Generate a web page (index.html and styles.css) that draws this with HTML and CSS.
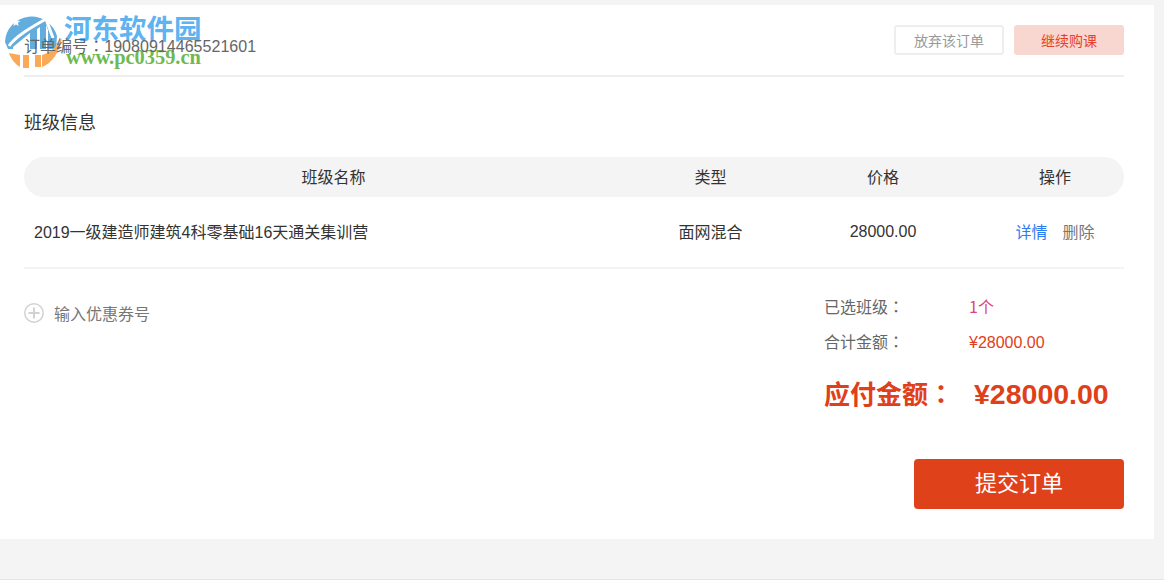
FILE: index.html
```html
<!DOCTYPE html>
<html lang="zh-CN">
<head>
  <meta charset="UTF-8" />
  <title>确认订单</title>
  <link rel="stylesheet" href="styles.css">
</head>
<body>
<div class="order-card">
  <div class="order-top">
    <span class="order-no">订单编号<span class="colon" lang="zh-Hant">：</span>19080914465521601</span>
    <div class="order-btns">
      <a class="btn-giveup">放弃该订单</a>
      <a class="btn-continue">继续购课</a>
    </div>
  </div>

  <h3 class="section-title">班级信息</h3>

  <div class="table-head">
    <div class="col-name">班级名称</div>
    <div class="col-type">类型</div>
    <div class="col-price">价格</div>
    <div class="col-op">操作</div>
  </div>
  <div class="table-row">
    <div class="col-name">2019一级建造师建筑4科零基础16天通关集训营</div>
    <div class="col-type">面网混合</div>
    <div class="col-price">28000.00</div>
    <div class="col-op"><a class="link-detail">详情</a><a class="link-del">删除</a></div>
  </div>

  <div class="order-bottom">
    <div class="coupon">
      <svg class="coupon-icon" width="20" height="20" viewBox="0 0 20 20">
        <circle cx="10" cy="10" r="9.25" fill="none" stroke="#d2d2d2" stroke-width="1.5"/>
        <path d="M10 4.500v11M4.500 10h11" stroke="#d2d2d2" stroke-width="2"/>
      </svg>
      <span>输入优惠券号</span>
    </div>
    <div class="summary">
      <div class="sum-row"><span class="sum-label">已选班级<span class="colon" lang="zh-Hant">：</span></span><span class="sum-count">1个</span></div>
      <div class="sum-row"><span class="sum-label">合计金额<span class="colon" lang="zh-Hant">：</span></span><span class="sum-money">¥28000.00</span></div>
      <div class="sum-pay"><span class="pay-label">应付金额<span class="colon" lang="zh-Hant">：</span></span><span>¥28000.00</span></div>
    </div>
  </div>

  <div class="submit-wrap"><a class="btn-submit">提交订单</a></div>
</div>

<div class="watermark">
  <svg class="wm-logo" width="66" height="66" viewBox="0 0 66 66">
    <path d="M5 37A26.500 26.500 0 0 1 57 31L56 44H8Z" fill="#5aa9dc"/>
    <path d="M9 41C16 31 32 22 46 14L53 33" fill="none" stroke="#fff" stroke-width="3"/>
    <path d="M13 42L30 28V45H13Z" fill="#fff"/>
    <path d="M37 24L40 22V45H37ZM46 20L48 25V45H46Z" fill="#fff"/>
    <path d="M16 13l1.200 2.800 3 .2-2.300 2 .7 3-2.600-1.600-2.600 1.600.7-3-2.300-2 3-.2z" fill="#fff"/>
    <path d="M9 48L20 50V62C15 59 11 54 9 48Z" fill="#f9a54f"/>
    <path d="M23 50H29V63H23ZM35 50H41V62H35Z" fill="#f9a54f"/>
    <path d="M42 62C52 58 59 48 62 33C56 42 50 48 42 50Z" fill="#f9a54f"/>
  </svg>
  <div class="wm-name">河东软件园</div>
  <div class="wm-url">www.pc0359.cn</div>
</div>

<div class="page-foot"></div>
</body>
</html>
```

FILE: styles.css
```css
html, body {
  margin: 0;
  padding: 0;
}

body {
  position: relative;
  height: 580px;
  overflow: hidden;
  background-color: #f4f4f4;
  font-family: "Noto Sans CJK SC", "Liberation Sans", sans-serif;
  font-size: 16px;
  color: #333;
}

a {
  display: block;
  text-decoration: none;
  cursor: pointer;
}

.colon {
  font-family: "Noto Sans CJK TC", sans-serif;
}

.order-card {
  width: 1100px;
  height: 534px;
  margin-top: 5px;
  padding: 0 30px 0 24px;
  background-color: white;
}

.order-top {
  display: flex;
  justify-content: space-between;
  align-items: center;
  height: 70px;
  border-bottom: 2px solid #eee;
}

/* sits above the watermark */
.order-no {
  position: relative;
  z-index: 1;
  color: #666;
  font-family: "Liberation Sans", "Noto Sans CJK SC", sans-serif;
  letter-spacing: 0.04px;
  padding-top: 9px;
}

.order-btns {
  display: flex;
  gap: 10px;
}

.order-btns a {
  box-sizing: border-box;
  width: 110px;
  height: 30px;
  line-height: 30px;
  text-align: center;
  font-size: 14px;
  border-radius: 3px;
}

.btn-giveup {
  border: 2px solid #eee;
  line-height: 26px !important;
  color: #999;
}

.btn-continue {
  background-color: #f7d7d0;
  color: #e8412a;
}

.section-title {
  margin: 0;
  padding-top: 30px;
  height: 50px;
  line-height: 28px;
  font-size: 18px;
  font-weight: normal;
  color: #333;
}

.table-head, .table-row {
  display: flex;
  align-items: center;
  box-sizing: border-box;
}

.table-head {
  height: 40px;
  padding-bottom: 2px;
  border-radius: 20px;
  background-color: #f4f4f4;
}

.table-row {
  height: 72px;
  padding-bottom: 3px;
  border-bottom: 2px solid #f4f4f4;
}

.col-name {
  width: 619px;
  text-align: center;
}

.col-type {
  width: 135px;
  text-align: center;
}

.col-price {
  width: 210px;
  text-align: center;
}

.col-op {
  width: 134px;
  padding-right: 2px;
  text-align: center;
}

.table-row .col-name {
  text-align: left;
  padding-left: 10px;
  width: 609px;
  font-family: "Liberation Sans", "Noto Sans CJK SC", sans-serif;
}

.table-row .col-price {
  padding-top: 3px;
  font-family: "Liberation Sans", sans-serif;
}

.table-row .col-op {
  display: flex;
  justify-content: center;
  gap: 15px;
  padding-right: 2px;
  width: 134px;
}

.link-detail {
  color: #2d7df0;
}

.link-del {
  color: #777;
}

.order-bottom {
  display: flex;
  justify-content: space-between;
}

.coupon {
  display: flex;
  align-items: center;
  gap: 10px;
  height: 20px;
  margin-top: 34px;
  color: #777;
}

.summary {
  width: 300px;
  padding-top: 20px;
}

.sum-row {
  display: flex;
  height: 35px;
  line-height: 35px;
  color: #666;
}

.sum-label {
  width: 145px;
}

.sum-count {
  color: #d9457a;
}

.sum-money {
  padding-top: 1px;
  color: #df4019;
  font-family: "Liberation Sans", sans-serif;
}

.sum-pay {
  display: flex;
  margin-top: 15px;
  height: 40px;
  line-height: 40px;
  font-size: 28.500px;
  font-weight: bold;
  color: #df4019;
  font-family: "Liberation Sans", "Noto Sans CJK SC", sans-serif;
}

.pay-label {
  width: 150px;
  font-size: 26px;
  font-family: "Noto Sans CJK SC", sans-serif;
  margin-top: -1px;
}

.submit-wrap {
  display: flex;
  justify-content: flex-end;
  margin-top: 45px;
}

.btn-submit {
  width: 210px;
  height: 50px;
  line-height: 45px;
  text-align: center;
  font-size: 22px;
  border-radius: 4px;
  background-color: #df411b;
  color: white;
}

.watermark {
  position: absolute;
  top: 8px;
  left: 5px;
  width: 210px;
  height: 62px;
}

.wm-logo {
  position: absolute;
  top: -3px;
  left: -5px;
  opacity: 0.95;
}

.wm-name {
  position: absolute;
  top: 4px;
  left: 59px;
  font-family: "Liberation Serif", "Noto Sans CJK SC", serif;
  font-size: 27.500px;
  line-height: 36px;
  font-weight: bold;
  color: rgba(72, 170, 240, 0.9);
  white-space: nowrap;
}

.wm-url {
  position: absolute;
  top: 38px;
  left: 61px;
  font-family: "Liberation Serif", serif;
  font-size: 20.400px;
  line-height: 22px;
  font-weight: bold;
  color: #6fb952;
  white-space: nowrap;
}

.page-foot {
  position: absolute;
  left: 0;
  right: 0;
  bottom: 0;
  height: 1px;
  background-color: #e4e4e4;
}
```
